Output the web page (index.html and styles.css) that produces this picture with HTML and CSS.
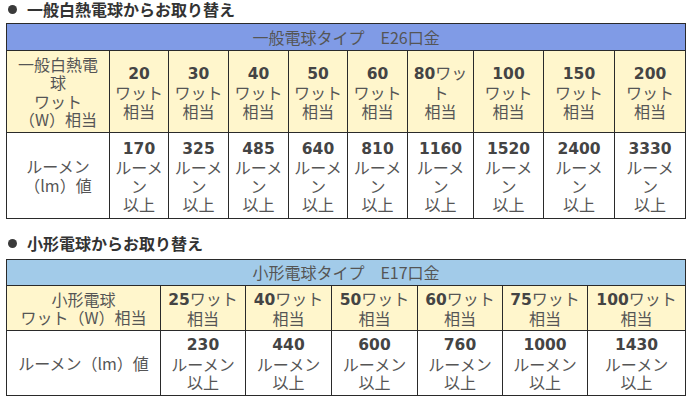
FILE: index.html
```html
<!DOCTYPE html>
<html lang="ja">
<head>
<meta charset="utf-8">
<link rel="stylesheet" href="styles.css">
</head>
<body>
<div class="page">
  <h2 class="sec"><span class="dot"></span>一般白熱電球からお取り替え</h2>
  <table class="lt t1">
    <colgroup>
      <col style="width:103px"><col style="width:59px"><col style="width:60px"><col style="width:60px"><col style="width:59px"><col style="width:60px"><col style="width:66px"><col style="width:70px"><col style="width:71px"><col style="width:71px">
    </colgroup>
    <tr class="r-head"><th colspan="10" class="blue">一般電球タイプ　E26口金</th></tr>
    <tr class="r-watt">
      <td class="lbl">一般白熱電<br>球<br>ワット<br>（W）相当</td>
      <td><b>20</b><br>ワット<br>相当</td>
      <td><b>30</b><br>ワット<br>相当</td>
      <td><b>40</b><br>ワット<br>相当</td>
      <td><b>50</b><br>ワット<br>相当</td>
      <td><b>60</b><br>ワット<br>相当</td>
      <td><b>80</b>ワッ<br>ト<br>相当</td>
      <td><b>100</b><br>ワット<br>相当</td>
      <td><b>150</b><br>ワット<br>相当</td>
      <td><b>200</b><br>ワット<br>相当</td>
    </tr>
    <tr class="r-lm">
      <td>ルーメン<br>（lm）値</td>
      <td><b>170</b><br>ルーメ<br>ン<br>以上</td>
      <td><b>325</b><br>ルーメ<br>ン<br>以上</td>
      <td><b>485</b><br>ルーメ<br>ン<br>以上</td>
      <td><b>640</b><br>ルーメ<br>ン<br>以上</td>
      <td><b>810</b><br>ルーメ<br>ン<br>以上</td>
      <td><b>1160</b><br>ルーメ<br>ン<br>以上</td>
      <td><b>1520</b><br>ルーメ<br>ン<br>以上</td>
      <td><b>2400</b><br>ルーメ<br>ン<br>以上</td>
      <td><b>3330</b><br>ルーメ<br>ン<br>以上</td>
    </tr>
  </table>

  <h2 class="sec sec2"><span class="dot"></span>小形電球からお取り替え</h2>
  <table class="lt t2">
    <colgroup>
      <col style="width:154px"><col style="width:85px"><col style="width:86px"><col style="width:86px"><col style="width:85px"><col style="width:85px"><col style="width:98px">
    </colgroup>
    <tr class="r-head2"><th colspan="7" class="lblue">小形電球タイプ　E17口金</th></tr>
    <tr class="r-watt2">
      <td class="lbl">小形電球<br>ワット（W）相当</td>
      <td><b>25</b>ワット<br>相当</td>
      <td><b>40</b>ワット<br>相当</td>
      <td><b>50</b>ワット<br>相当</td>
      <td><b>60</b>ワット<br>相当</td>
      <td><b>75</b>ワット<br>相当</td>
      <td><b>100</b>ワット<br>相当</td>
    </tr>
    <tr class="r-lm2">
      <td>ルーメン（lm）値</td>
      <td><b>230</b><br>ルーメン<br>以上</td>
      <td><b>440</b><br>ルーメン<br>以上</td>
      <td><b>600</b><br>ルーメン<br>以上</td>
      <td><b>760</b><br>ルーメン<br>以上</td>
      <td><b>1000</b><br>ルーメン<br>以上</td>
      <td><b>1430</b><br>ルーメン<br>以上</td>
    </tr>
  </table>
</div>
</body>
</html>
```

FILE: styles.css
```css
html, body {
  margin: 0;
  padding: 0;
  background: #ffffff;
}
.page {
  padding: 0 0 0 6px;
  font-family: "Noto Sans CJK JP", "Noto Sans", sans-serif;
  color: #555555;
}
.sec {
  margin: 0;
  padding-left: 2px;
  height: 18px;
  font-size: 16px;
  line-height: 18px;
  font-weight: bold;
  color: #333333;
  display: flex;
  align-items: center;
}
.sec2 {
  margin-top: 15px;
}
.dot {
  display: inline-block;
  width: 9px;
  height: 9px;
  border-radius: 50%;
  background: #3a3a3a;
  margin-right: 10px;
}
.lt {
  border-collapse: collapse;
  table-layout: fixed;
  width: 680px;
  margin-top: 5px;
  font-size: 16px;
  line-height: 18.5px;
}
.t2 {
  margin-top: 7px;
}
.lt th, .lt td {
  border: 1px solid #2a2a2a;
  padding: 0 4px;
  text-align: center;
  vertical-align: middle;
  font-weight: normal;
  color: #555555;
}
.lt b {
  font-family: "DejaVu Sans", "Noto Sans CJK JP", sans-serif;
  font-weight: bold;
  color: #444444;
  font-size: 15.5px;
}
.blue {
  background: #809be6;
  height: 26px;
}
.lblue {
  background: #a2cbe9;
  height: 25px;
}
.r-watt td, .r-watt2 td {
  background: #fff6cc;
}
.r-watt td {
  height: 81px;
}
.r-lm td {
  height: 85px;
  background: #ffffff;
}
.r-watt2 td {
  height: 44px;
}
.r-lm2 td {
  height: 64px;
  background: #ffffff;
}
```
